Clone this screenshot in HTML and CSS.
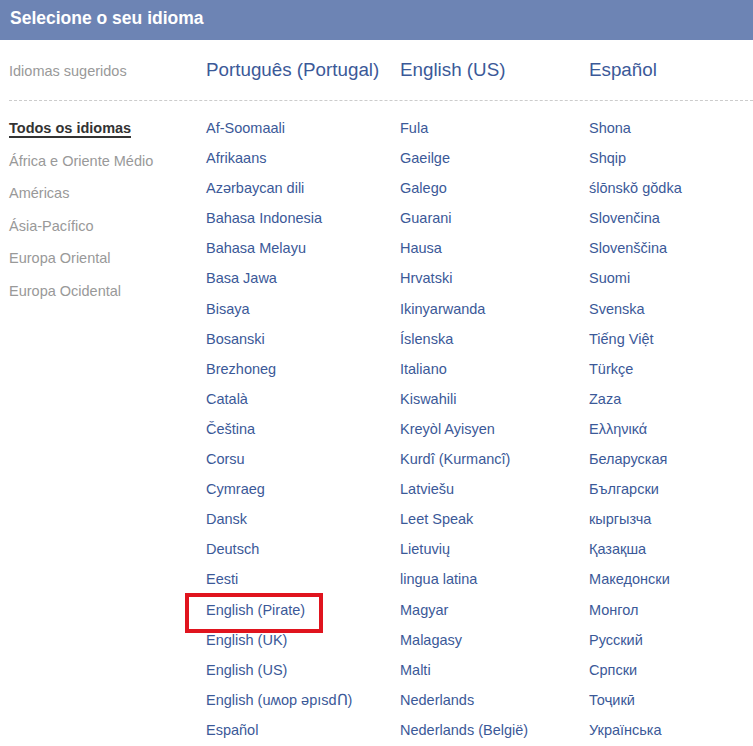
FILE: index.html
```html
<!DOCTYPE html>
<html>
  <head>
    <title>Selecione o seu idioma</title>
    <link rel="stylesheet" href="styles.css">
  </head>

  <body>
    <div class="dialog">
      <div class="dialog-header">Selecione o seu idioma</div>

      <div class="suggested">
        <div class="suggested-label">Idiomas sugeridos</div>
        <a href="#" class="suggested-lang">Português (Portugal)</a>
        <a href="#" class="suggested-lang">English (US)</a>
        <a href="#" class="suggested-lang">Español</a>
      </div>

      <div class="all-langs">
        <ul class="regions">
          <li class="active"><a href="#">Todos os idiomas</a></li>
          <li><a href="#">África e Oriente Médio</a></li>
          <li><a href="#">Américas</a></li>
          <li><a href="#">Ásia-Pacífico</a></li>
          <li><a href="#">Europa Oriental</a></li>
          <li><a href="#">Europa Ocidental</a></li>
        </ul>

        <ul class="lang-list">
          <li><a href="#">Af-Soomaali</a></li>
          <li><a href="#">Afrikaans</a></li>
          <li><a href="#">Azərbaycan dili</a></li>
          <li><a href="#">Bahasa Indonesia</a></li>
          <li><a href="#">Bahasa Melayu</a></li>
          <li><a href="#">Basa Jawa</a></li>
          <li><a href="#">Bisaya</a></li>
          <li><a href="#">Bosanski</a></li>
          <li><a href="#">Brezhoneg</a></li>
          <li><a href="#">Català</a></li>
          <li><a href="#">Čeština</a></li>
          <li><a href="#">Corsu</a></li>
          <li><a href="#">Cymraeg</a></li>
          <li><a href="#">Dansk</a></li>
          <li><a href="#">Deutsch</a></li>
          <li><a href="#">Eesti</a></li>
          <li class="highlight"><a href="#">English (Pirate)</a></li>
          <li><a href="#">English (UK)</a></li>
          <li><a href="#">English (US)</a></li>
          <li><a href="#">English (uʍop ǝpısdՈ)</a></li>
          <li><a href="#">Español</a></li>
        </ul>

        <ul class="lang-list">
          <li><a href="#">Fula</a></li>
          <li><a href="#">Gaeilge</a></li>
          <li><a href="#">Galego</a></li>
          <li><a href="#">Guarani</a></li>
          <li><a href="#">Hausa</a></li>
          <li><a href="#">Hrvatski</a></li>
          <li><a href="#">Ikinyarwanda</a></li>
          <li><a href="#">Íslenska</a></li>
          <li><a href="#">Italiano</a></li>
          <li><a href="#">Kiswahili</a></li>
          <li><a href="#">Kreyòl Ayisyen</a></li>
          <li><a href="#">Kurdî (Kurmancî)</a></li>
          <li><a href="#">Latviešu</a></li>
          <li><a href="#">Leet Speak</a></li>
          <li><a href="#">Lietuvių</a></li>
          <li><a href="#">lingua latina</a></li>
          <li><a href="#">Magyar</a></li>
          <li><a href="#">Malagasy</a></li>
          <li><a href="#">Malti</a></li>
          <li><a href="#">Nederlands</a></li>
          <li><a href="#">Nederlands (België)</a></li>
        </ul>

        <ul class="lang-list">
          <li><a href="#">Shona</a></li>
          <li><a href="#">Shqip</a></li>
          <li><a href="#">ślōnskŏ gŏdka</a></li>
          <li><a href="#">Slovenčina</a></li>
          <li><a href="#">Slovenščina</a></li>
          <li><a href="#">Suomi</a></li>
          <li><a href="#">Svenska</a></li>
          <li><a href="#">Tiếng Việt</a></li>
          <li><a href="#">Türkçe</a></li>
          <li><a href="#">Zaza</a></li>
          <li><a href="#">Ελληνικά</a></li>
          <li><a href="#">Беларуская</a></li>
          <li><a href="#">Български</a></li>
          <li><a href="#">кыргызча</a></li>
          <li><a href="#">Қазақша</a></li>
          <li><a href="#">Македонски</a></li>
          <li><a href="#">Монгол</a></li>
          <li><a href="#">Русский</a></li>
          <li><a href="#">Српски</a></li>
          <li><a href="#">Тоҷикӣ</a></li>
          <li><a href="#">Українська</a></li>
        </ul>
      </div>
    </div>
  </body>
</html>
```

FILE: styles.css
```css
body {
  font-family: Arial, "Liberation Sans", sans-serif;
  background-color: white;
  margin: 0;
  overflow: hidden;
}

a {
  text-decoration: none;
}

.dialog-header {
  background-color: #6d84b4;
  color: white;
  font-size: 17.5px;
  font-weight: bold;
  height: 40px;
  line-height: 36px;
  padding-left: 10px;
}

.suggested {
  display: grid;
  grid-template-columns: 197px 194px 189px 1fr;
  align-items: center;
  height: 60px;
  margin-left: 9px;
  border-bottom: 1px dashed #ccc;
}

.suggested-label {
  color: #999;
  font-size: 14.5px;
  padding-top: 1px;
}

.suggested-lang {
  color: #3b5998;
  font-size: 18.8px;
}

.all-langs {
  display: grid;
  grid-template-columns: 197px 194px 189px 1fr;
  margin-left: 9px;
  padding-top: 12px;
}

.all-langs ul {
  list-style: none;
  margin: 0;
  padding: 0;
}

.regions {
  margin-top: -1px !important;
}

.regions li {
  font-size: 14.5px;
  line-height: 32.6px;
}

.regions a {
  color: #999;
}

.regions .active a {
  color: #333;
  font-weight: bold;
  border-bottom: 2px solid #333;
}

.lang-list li {
  font-size: 14.5px;
  line-height: 30.1px;
  position: relative;
}

.lang-list a {
  color: #3b5998;
}

.highlight::before {
  content: "";
  position: absolute;
  left: -21px;
  top: -2px;
  width: 130px;
  height: 32px;
  border: 4px solid #e0141e;
}
```
